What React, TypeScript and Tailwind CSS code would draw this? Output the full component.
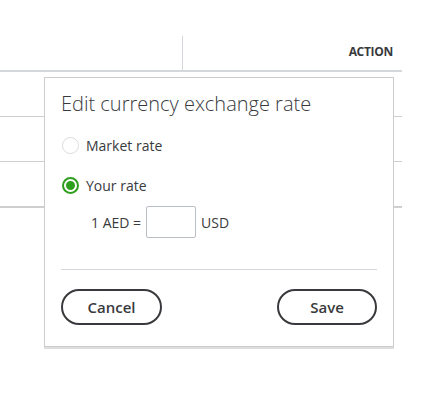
import { useState } from "react";

function Radio({ checked, label, onClick }: { checked: boolean; label: string; onClick: () => void }) {
    return (
        <button onClick={onClick} className="flex items-center gap-[7px] text-left">
            <span
                className={
                    checked
                        ? "flex h-[17px] w-[17px] items-center justify-center rounded-full border-2 border-[#2ca01c]"
                        : "flex h-[17px] w-[17px] items-center justify-center rounded-full border border-[#dcdcdc]"
                }
            >
                {checked && <span className="h-[9px] w-[9px] rounded-full bg-[#2ca01c]" />}
            </span>
            <span className="text-[14px] font-medium text-[#393a3d]">{label}</span>
        </button>
    );
}

export default function App() {
    const [mode, setMode] = useState("your");

    return (
        <div className="relative h-[414px] w-[438px] overflow-hidden bg-white font-['Open_Sans',sans-serif] text-[#393a3d]">
            {/* table behind the popover */}
            <div className="w-[402px] pt-[36px]">
                <div className="flex h-[36px] border-b-2 border-[#d4d7dc]">
                    <div className="h-full w-[183px] border-r border-[#d4d7dc]" />
                    <div className="flex flex-1 items-center justify-end pr-[9px] pb-[2px] text-[12px] font-bold tracking-tight">
                        ACTION
                    </div>
                </div>
                <div className="h-[45px] border-b border-[#cfcfcf]" />
                <div className="h-[45px] border-b border-[#cfcfcf]" />
                <div className="h-[46px] border-b-2 border-[#cfcfcf]" />
            </div>

            {/* popover */}
            <div className="absolute left-[44px] top-[77px] w-[350px] border border-[#cccccc] bg-white px-[16px] pt-[12px] pb-[21px] shadow-[0_2px_0_0_#dddddd]">
                <h2 className="text-[20px] leading-[28px] font-light text-[#393a3d]">Edit currency exchange rate</h2>

                <div className="mt-[17px] ml-[1px] flex flex-col gap-[19px]">
                    <Radio checked={mode === "market"} label="Market rate" onClick={() => setMode("market")} />
                    <Radio checked={mode === "your"} label="Your rate" onClick={() => setMode("your")} />
                </div>

                <div className="mt-[10px] ml-[30px] flex items-center gap-[5px] text-[14px]">
                    <span>1 AED =</span>
                    <input className="h-[32px] w-[50px] rounded-[2px] border border-[#babec5] outline-none" />
                    <span>USD</span>
                </div>

                <div className="mt-[31px] border-t border-[#d4d7dc]" />

                <div className="mt-[19px] flex justify-between">
                    <button className="h-[36px] w-[101px] rounded-full border-2 border-[#393a3d] text-[15px] font-semibold">
                        Cancel
                    </button>
                    <button className="h-[36px] w-[100px] rounded-full border-2 border-[#393a3d] text-[15px] font-semibold">
                        Save
                    </button>
                </div>
            </div>
        </div>
    );
}
